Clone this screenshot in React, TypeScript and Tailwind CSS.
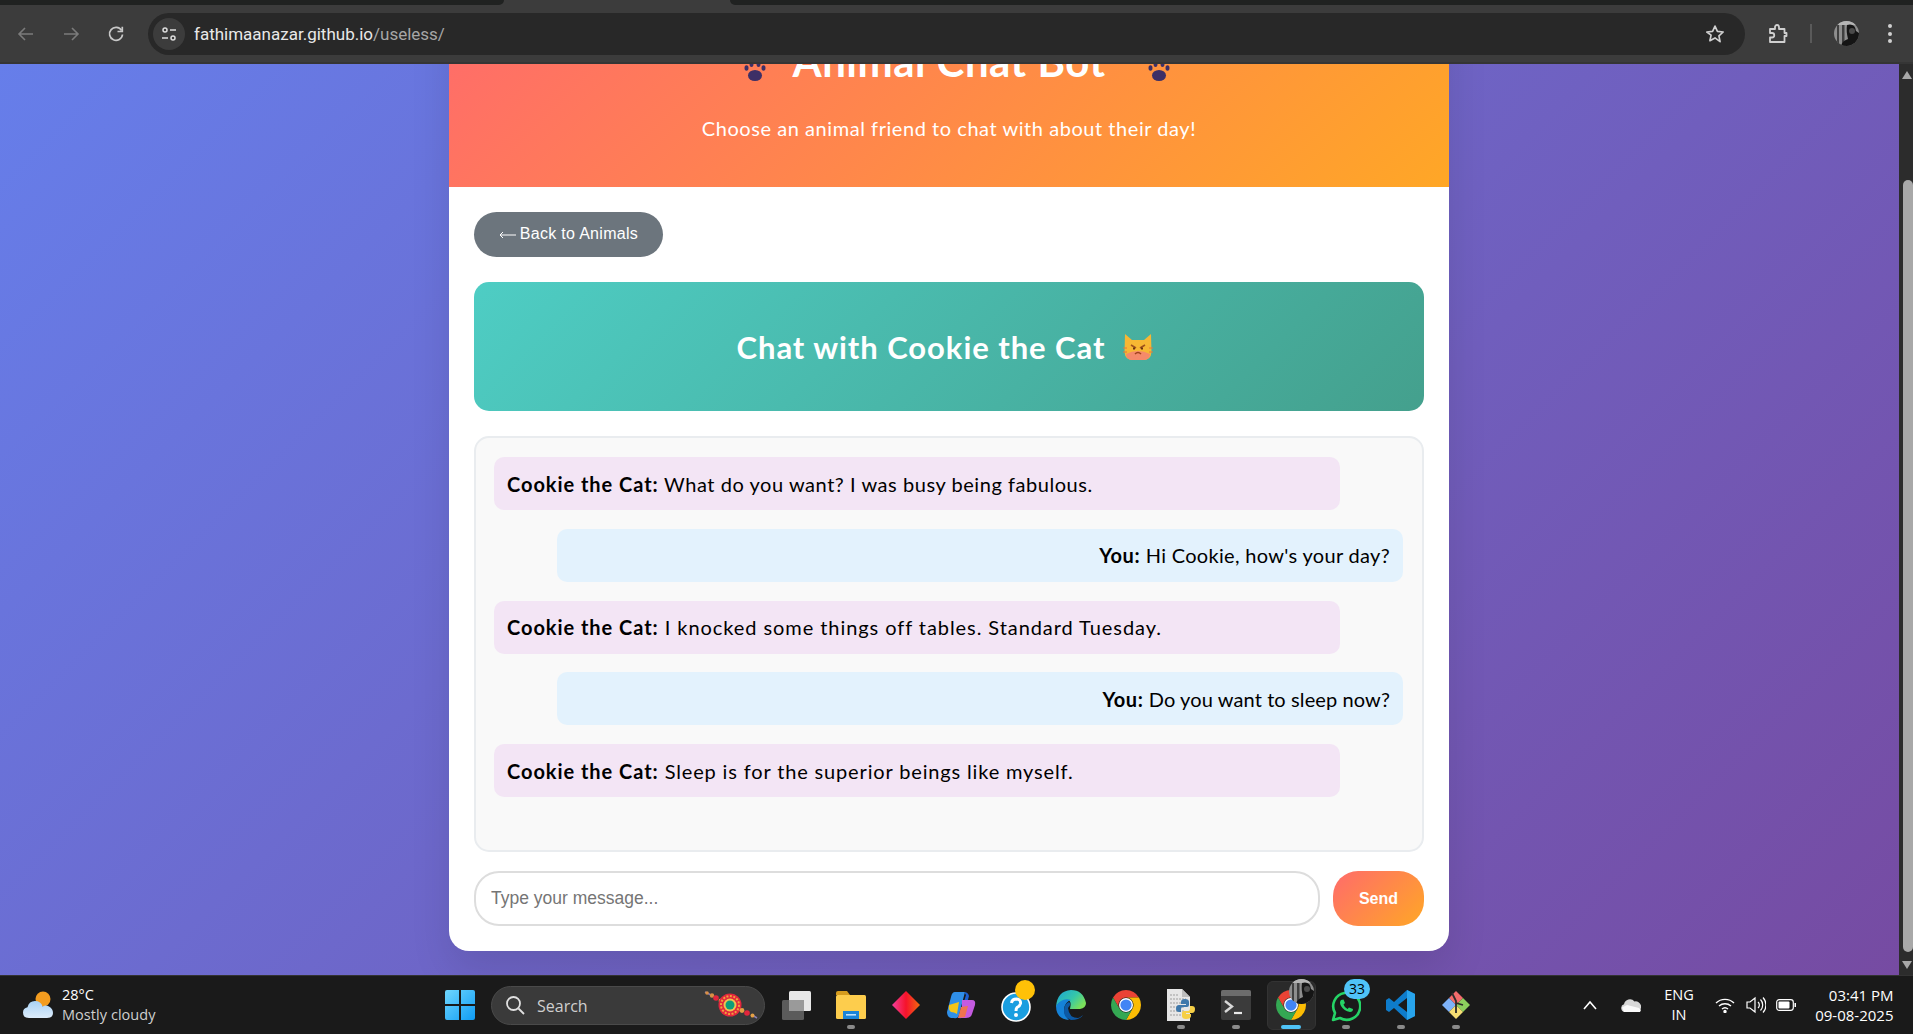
import React from "react";

const comic = "font-['Lato','Noto_Sans',sans-serif]";

function Chrome({ size = 30 }: { size?: number }) {
  return (
    <svg width={size} height={size} viewBox="0 0 24 24">
      <path fill="#ea4335" d="M22.39 6A12 12 0 0 0 1.61 6L6.8 15A6 6 0 0 1 12 6Z" />
      <path fill="#fbbc04" d="M12 24A12 12 0 0 0 22.39 6H12A6 6 0 0 1 17.2 15Z" />
      <path fill="#34a853" d="M1.61 6A12 12 0 0 0 12 24L17.2 15A6 6 0 0 1 6.8 15Z" />
      <circle cx="12" cy="12" r="5.6" fill="#fff" />
      <circle cx="12" cy="12" r="4.5" fill="#4285f4" />
    </svg>
  );
}

function Avatar({ id }: { id: string }) {
  return (
    <svg width="25" height="25" viewBox="0 0 25 25">
      <defs>
        <clipPath id={id}>
          <circle cx="12.500" cy="12.500" r="12.500" />
        </clipPath>
      </defs>
      <g clipPath={`url(#${id})`}>
        <rect width="25" height="25" fill="#8e8e8e" />
        <path d="M3 3h2v22H3zM8 3h2.500v22H8z" fill="#3f3f3f" />
        <rect x="0" y="0" width="25" height="4" fill="#b5b5b5" />
        <path d="M13 4 Q21 2 22 10 L25 12 V25 H7 Q8 20 14 18 Q12 10 13 4Z" fill="#151515" />
        <circle cx="18" cy="10" r="3" fill="#4a4a4a" />
      </g>
    </svg>
  );
}

function Paw() {
  return (
    <svg width="22" height="20" viewBox="0 0 22 20">
      <ellipse cx="11" cy="14.500" rx="7" ry="5.500" fill="#3d2f66" />
      <ellipse cx="2.500" cy="7" rx="2" ry="2.800" fill="#3d2f66" />
      <ellipse cx="7.500" cy="3" rx="2" ry="3" fill="#3d2f66" />
      <ellipse cx="14.500" cy="3" rx="2" ry="3" fill="#3d2f66" />
      <ellipse cx="19.500" cy="7" rx="2" ry="2.800" fill="#3d2f66" />
    </svg>
  );
}

function PoutingCat() {
  return (
    <svg width="30" height="28" viewBox="0 0 30 28">
      <path d="M2 1 L9 7 H21 L28 1 L28.500 19 Q28 27 20 27 H10 Q2 27 1.500 19 Z" fill="#f7b733" />
      <path d="M3 21 Q15 15 27 21 Q27 27 20 27 H10 Q3 27 3 21Z" fill="#f58a6a" />
      <path d="M8 12 L13 15 M22 12 L17 15" stroke="#a0521d" strokeWidth="1.6" />
      <path d="M10 15.500h2M18 15.500h2" stroke="#6b3410" strokeWidth="2" />
      <path d="M12 21 Q15 18 18 21" stroke="#a0421d" strokeWidth="1.500" fill="none" />
      <path d="M0 15h4M0 19h4M26 15h4M26 19h4" stroke="#e8763a" strokeWidth="1" />
    </svg>
  );
}

function Weather() {
  return (
    <svg width="32" height="28" viewBox="0 0 32 28">
      <defs>
        <linearGradient id="wc" x1="0" y1="0" x2="0" y2="1">
          <stop offset="0" stopColor="#a9d2f5" />
          <stop offset="1" stopColor="#dcecfb" />
        </linearGradient>
      </defs>
      <circle cx="21" cy="8" r="7.500" fill="#f39c1f" />
      <path d="M7 27 Q1 27 1 21.500 Q1 17 5.500 16.200 Q7 10 13 10 Q19 10 20.500 15.500 Q24 13.500 27 15.500 Q31 17.500 31 22 Q31 27 25 27 Z" fill="url(#wc)" />
    </svg>
  );
}

function Rakhi() {
  return (
    <svg width="54" height="28" viewBox="0 0 54 28">
      <path d="M1 1 L6 3.500M48 24 L53 27" stroke="#8a7fb8" strokeWidth="1.500" />
      <circle cx="3" cy="2" r="1.800" fill="#d98f45" />
      <circle cx="8" cy="4.500" r="2.200" fill="#d98f45" />
      <circle cx="12" cy="7" r="2.800" fill="#e3263d" />
      <circle cx="17" cy="10" r="2.400" fill="#e5a045" />
      <circle cx="26" cy="14" r="11.500" fill="#e3263d" />
      <circle cx="26" cy="14" r="9" fill="none" stroke="#f2a33a" strokeWidth="2" strokeDasharray="2 1.500" />
      <circle cx="26" cy="14" r="6.500" fill="#f2c14e" />
      <circle cx="26" cy="14" r="4.500" fill="#0f9d7a" />
      <circle cx="38" cy="19.500" r="2.400" fill="#e5a045" />
      <circle cx="43" cy="22" r="2.800" fill="#e3263d" />
      <circle cx="48.500" cy="24.500" r="2" fill="#e5a045" />
    </svg>
  );
}

function TaskView() {
  return (
    <svg width="32" height="32" viewBox="0 0 32 32">
      <rect x="2" y="11" width="22" height="20" rx="1.500" fill="#5b5b5b" />
      <rect x="9" y="2" width="22" height="20" rx="1.500" fill="#e8e8e8" />
      <rect x="9" y="11" width="15" height="11" fill="#9a9a9a" />
    </svg>
  );
}

function Folder() {
  return (
    <svg width="30" height="28" viewBox="0 0 30 28">
      <path d="M0 2 Q0 0 2 0 H11 L14 4 H0Z" fill="#d69c1e" />
      <rect y="4" width="30" height="24" rx="1.500" fill="#fdcd4d" />
      <rect x="7" y="20" width="16" height="8" fill="#1a84d8" />
      <rect x="10" y="23" width="10" height="1.600" fill="#bfe1fa" />
    </svg>
  );
}

function Diamond() {
  return (
    <svg width="30" height="30" viewBox="0 0 30 30">
      <defs>
        <linearGradient id="dg" x1="0" y1="0" x2="1" y2="0">
          <stop offset="0" stopColor="#f43f9d" />
          <stop offset="0.500" stopColor="#f5132b" />
          <stop offset="1" stopColor="#f36a10" />
        </linearGradient>
      </defs>
      <path d="M15 1 L29 15 L15 29 L1 15Z" fill="url(#dg)" />
    </svg>
  );
}

function Copilot() {
  return (
    <svg width="30" height="30" viewBox="0 0 30 30">
      <path d="M9 2 H19 L13 25 Q12 29 8 28 H5 Q1 27 1 22 L5 7 Q6 2 9 2Z" fill="#2f8fe8" />
      <path d="M3 15 L13 12 L11 24 Q8 22 5 22 Q2 20 3 15Z" fill="#f5c518" />
      <path d="M18 2 Q22 2 23 6 L18 25 Q17 29 13 28 L20 5Z" fill="#1e5fd0" />
      <path d="M16 10 H26 Q30 10 29 15 L26 24 Q25 28 20 28 H12 L16 22 Z" fill="#c45be0" />
      <path d="M15 17 L22 16 L19 27 L12 28Z" fill="#f0744f" />
    </svg>
  );
}

function Help() {
  return (
    <div className="relative w-[30px] h-[30px]">
      <svg width="30" height="32" viewBox="0 0 30 32">
        <circle cx="15" cy="17" r="14" fill="#1a9ee0" stroke="#fff" strokeWidth="1.600" />
        <path d="M10.500 13 Q11 9 15.500 9 Q20 9.500 19.500 13.500 Q19 16 16 17.500 Q15 18.500 15 21" stroke="#fff" strokeWidth="3" fill="none" />
        <circle cx="15" cy="25" r="2" fill="#fff" />
      </svg>
      <span className="absolute left-[14px] top-[-10px] w-[20px] h-[20px] rounded-full bg-[#ffc107]" />
    </div>
  );
}

function Edge() {
  return (
    <svg width="30" height="30" viewBox="0 0 30 30">
      <defs>
        <linearGradient id="eg" x1="0" y1="0" x2="1" y2="0.600">
          <stop offset="0" stopColor="#1aa3d9" />
          <stop offset="0.600" stopColor="#36c7a8" />
          <stop offset="1" stopColor="#7be05a" />
        </linearGradient>
      </defs>
      <path d="M15 0 Q27 0 30 13 Q30 18 24 19 H14 Q16 11 12 10 Q4 10 0 17 Q1 1 15 0Z" fill="url(#eg)" />
      <path d="M0 16 Q0 29 13 30 Q8 25 8 19 Q9 12 15 10 Q6 7 0 16Z" fill="#1582d8" />
      <path d="M12 18 Q13 28 22 28 Q25 27 27 25 Q24 30 15 30 Q8 28 8 21 Q8 14 13 12 Q16 14 12 18Z" fill="#0c59a4" />
    </svg>
  );
}

function PyFile() {
  return (
    <div className="relative w-[30px] h-[32px]">
      <svg width="30" height="32" viewBox="0 0 30 32">
        <path d="M1 0 H16 L24 8 V32 H1Z" fill="#e6e6e6" />
        <path d="M16 0 L24 8 H16Z" fill="#bdbdbd" />
        <path d="M4 6h9M4 10h16M4 14h16M4 18h14M4 22h14M4 26h16" stroke="#9d9d9d" strokeWidth="1.200" strokeDasharray="2 1" />
        <path d="M19 10 Q15 10 15 13 V15 H20 V16 H13 Q10 16 10 20 Q10 23 13 23 H15 V20 Q15 18 17 18 H21 Q23 18 23 16 V13 Q23 10 19 10Z" fill="#3e78ab" />
        <path d="M20 30 Q25 30 25 27 V25 H20 V24 H26 Q29 24 29 20 Q29 17 26 17 H24 V19 Q24 22 22 22 H18 Q16 22 16 24 V27 Q16 30 20 30Z" fill="#f6cf46" />
      </svg>
    </div>
  );
}

function Terminal() {
  return (
    <svg width="30" height="30" viewBox="0 0 30 30">
      <rect y="0" width="30" height="30" rx="2" fill="#3b3b3b" />
      <path d="M2 0 H28 Q30 0 30 2 V6 H0 V2 Q0 0 2 0Z" fill="#6c6c6c" />
      <path d="M4 11 L11 16.500 L4 22" stroke="#d8d8d8" strokeWidth="2.400" fill="none" />
      <path d="M13 23h8" stroke="#e8e8e8" strokeWidth="2.200" />
    </svg>
  );
}

function Whatsapp() {
  return (
    <div className="relative w-[30px] h-[30px]">
      <svg width="30" height="32" viewBox="0 0 30 32">
        <path d="M2 30 L4 23 A13.500 13.500 0 1 1 9 28 Z" fill="none" stroke="#25d366" strokeWidth="2.600" strokeLinejoin="round" />
        <path d="M10 10 Q8 12 10 16 Q13 21 19 22 Q22 22 22 19 L18 17.500 L16.500 19 Q13.500 17.500 12.500 14.500 L14 13 L12.500 9.500 Z" fill="#25d366" />
      </svg>
      <span className="absolute left-[13px] top-[-11px] w-[26px] h-[20px] rounded-full bg-[#4fc3f7] text-black text-[14px] leading-[20px] text-center font-['Open_Sans',sans-serif]">33</span>
    </div>
  );
}

function VsCode() {
  return (
    <svg width="30" height="30" viewBox="0 0 30 30">
      <path d="M21 0 L29 4 V26 L21 30 L8 18 L3 22 L0 20 V10 L3 8 L8 12Z M21 8 L12 15 L21 22Z" fill="#0e7ccb" fillRule="evenodd" />
      <path d="M21 0 L29 4 V26 L21 30Z" fill="#28a4ec" />
    </svg>
  );
}

function Git() {
  return (
    <svg width="30" height="30" viewBox="0 0 30 30">
      <path d="M15 15 L8 8 L15 1 L22 8Z" fill="#f36b6b" />
      <path d="M15 15 L8 8 L1 15 L8 22Z" fill="#7eb2f8" />
      <path d="M22 8 L29 15 L22 22 L15 15Z" fill="#8ccf5e" />
      <path d="M15 15 L22 22 L15 29 L8 22Z" fill="#f6de73" />
      <path d="M11 3 L15 11 V23 M15 13 L22 15" stroke="#2b2b2b" strokeWidth="1.800" fill="none" />
    </svg>
  );
}

function TaskIcon({ children, dot, active }: { children?: React.ReactNode; dot?: boolean; active?: boolean }) {
  return (
    <div className="w-[55px] h-full flex items-center justify-center relative">
      {active && <span className="absolute left-[3px] right-[3px] top-[5px] bottom-[4px] rounded-md bg-[#2a2a2a] border border-[#333]" />}
      <div className="relative">{children}</div>
      {dot && !active && <span className="absolute bottom-[5px] left-1/2 -translate-x-1/2 w-[8px] h-[4px] rounded-full bg-[#8a8a8a]" />}
      {active && <span className="absolute bottom-[5px] left-1/2 -translate-x-1/2 w-[20px] h-[4px] rounded-full bg-[#4fc3f7]" />}
    </div>
  );
}

function Message({ who, text, me, track }: { who: string; text: string; me?: boolean; track: string }) {
  return (
    <div className={`w-[846px] h-[53px] rounded-[10px] px-[13px] flex items-center text-black ${me ? "self-end justify-end bg-[#e3f2fd]" : "self-start bg-[#f3e5f5]"}`}>
      <span className={`${comic} text-[20px] ${track}`}>
        <strong className={`font-bold ${me ? "tracking-[0.6px]" : "tracking-[0.95px]"}`}>{who}:</strong> {text}
      </span>
    </div>
  );
}

export default function App() {
  return (
    <div className="w-[1913px] h-[1034px] flex flex-col overflow-hidden bg-[#1a1a1a]">
      {/* browser chrome */}
      <div className="h-[64px] shrink-0 bg-[#3c3c3c] flex flex-col relative">
        <div className="h-[5px] flex">
          <div className="w-[504px] bg-[#202221] rounded-br-lg" />
          <div className="w-[226px]" />
          <div className="flex-1 bg-[#202221] rounded-bl-lg" />
        </div>
        <div className="h-[57px] flex items-center text-[#c8c8c8]">
          <div className="w-[148px] flex items-center pl-[16px] gap-[25px] shrink-0">
            <svg width="20" height="20" viewBox="0 0 20 20" fill="none" stroke="#7b7b7b" strokeWidth="1.600"><path d="M17 10H3M9 4l-6 6 6 6" /></svg>
            <svg width="20" height="20" viewBox="0 0 20 20" fill="none" stroke="#7b7b7b" strokeWidth="1.600"><path d="M3 10h14M11 4l6 6-6 6" /></svg>
            <svg width="20" height="20" viewBox="0 0 20 20" fill="none" stroke="#c8c8c8" strokeWidth="1.700"><path d="M15.600 6.500A6.500 6.500 0 1 0 16.500 10.500" /><path d="M16.300 2.700v4.800h-4.800" /></svg>
          </div>
          <div className="w-[1597px] h-[42px] bg-[#282828] rounded-full flex items-center pl-[5px] pr-[20px] mt-[1px]">
            <div className="w-[32px] h-[32px] rounded-full bg-[#3c3c3c] flex items-center justify-center">
              <svg width="16" height="16" viewBox="0 0 16 16" fill="none" stroke="#dcdcdc" strokeWidth="1.500"><circle cx="4" cy="4" r="2" /><path d="M9 4h6M1 12h6" /><circle cx="12" cy="12" r="2" /></svg>
            </div>
            <span className="ml-[9px] pt-[1px] text-[17px] font-['Roboto',sans-serif] text-[#e8e8e8]">fathimaanazar.github.io<span className="text-[#a6a6a6]">/useless/</span></span>
            <svg className="ml-auto" width="20" height="20" viewBox="0 0 24 24" fill="none" stroke="#d0d0d0" strokeWidth="2" strokeLinejoin="round"><path d="M12 2.500l2.900 6.300 6.900.8-5.100 4.700 1.400 6.800L12 16.700l-6.100 3.400 1.400-6.800L2.200 9.600l6.900-.8z" /></svg>
          </div>
          <svg className="ml-[24px]" width="20" height="20" viewBox="0 0 20 20" fill="none" stroke="#d0d0d0" strokeWidth="1.800" strokeLinejoin="round"><path d="M1 5h5V3a2 2 0 0 1 4 0v2h5.500v4h2v3h-2v6H1v-4.500h2a2.200 2.200 0 0 0 0-4.500H1z" /></svg>
          <span className="ml-[21px] w-[2px] h-[19px] bg-[#5a5a5a]" />
          <div className="ml-[22px] flex"><Avatar id="av1" /></div>
          <div className="ml-[29px] flex flex-col gap-[3.500px]">
            <span className="w-[4px] h-[4px] rounded-full bg-[#d0d0d0]" />
            <span className="w-[4px] h-[4px] rounded-full bg-[#d0d0d0]" />
            <span className="w-[4px] h-[4px] rounded-full bg-[#d0d0d0]" />
          </div>
        </div>
        <div className="h-[2px] bg-[#353535]" />
      </div>

      {/* page */}
      <div className="h-[911px] shrink-0 flex overflow-hidden">
        <div className="flex-1 flex justify-center bg-[linear-gradient(135deg,#667eea,#764ba2)]">
          <div className="w-[1000px] h-[947px] -mt-[60px] mr-[1px] bg-white rounded-[20px] overflow-hidden shadow-[0_20px_40px_rgba(0,0,0,0.1)] flex flex-col shrink-0">
            <div className="h-[183px] shrink-0 bg-[linear-gradient(135deg,#ff6b6b,#ffa726)] text-white flex flex-col items-center">
              <div className="mt-[33px] h-[48px] flex items-end pl-[15px]">
                <span className="mb-[4px]"><Paw /></span>
                <h1 className={`${comic} font-bold text-[42px] leading-[48px] ml-[27px] mr-[48px] tracking-[0.5px] w-[307px] text-center whitespace-nowrap`}>Animal Chat Bot</h1>
                <span className="mb-[4px]"><Paw /></span>
              </div>
              <p className={`${comic} mt-[30px] text-[20px] leading-[26px] tracking-[0.55px]`}>Choose an animal friend to chat with about their day!</p>
            </div>
            <div className="flex-1 px-[25px] pt-[25px] flex flex-col">
              <button className="w-[189px] h-[45px] pb-[1px] rounded-[25px] bg-[#6c757d] text-white text-[16px] tracking-[0.3px] font-['Liberation_Sans',sans-serif] flex items-center justify-center gap-[4px]">
                <svg width="17" height="8" viewBox="0 0 17 8" fill="none" stroke="#fff" strokeWidth="1" className="mt-[2px]"><path d="M17 4H1M4 1L1 4l3 3" /></svg>
                <span>Back to Animals</span>
              </button>
              <div className="mt-[25px] h-[129px] rounded-[15px] bg-[linear-gradient(135deg,#4ecdc4,#44a08d)] flex items-center justify-center gap-[17px] text-white pr-[9px]">
                <h2 className={`${comic} font-bold text-[31px] tracking-[0.95px] pt-[2px]`}>Chat with Cookie the Cat</h2>
                <PoutingCat />
              </div>
              <div className="mt-[25px] h-[416px] rounded-[15px] border-2 border-[#e9ecef] bg-[#f9f9f9] pl-[18px] pr-[19px] pt-[19px] flex flex-col gap-[18.750px]">
                <Message track="tracking-[0.55px]" who="Cookie the Cat" text="What do you want? I was busy being fabulous." />
                <Message track="tracking-[0.32px]" me who="You" text="Hi Cookie, how's your day?" />
                <Message track="tracking-[0.93px]" who="Cookie the Cat" text="I knocked some things off tables. Standard Tuesday." />
                <Message track="tracking-[0.11px]" me who="You" text="Do you want to sleep now?" />
                <Message track="tracking-[0.85px]" who="Cookie the Cat" text="Sleep is for the superior beings like myself." />
              </div>
              <div className="mt-[19px] flex gap-[13px]">
                <input
                  readOnly
                  placeholder="Type your message..."
                  className="w-[846px] h-[55px] rounded-[25px] border-2 border-[#ddd] bg-white px-[15px] text-[17.500px] font-['Liberation_Sans',sans-serif] placeholder:text-[#757575] outline-none"
                />
                <button className="w-[91px] h-[55px] rounded-[25px] bg-[linear-gradient(135deg,#ff6b6b,#ffa726)] text-white font-bold text-[16px] font-['Liberation_Sans',sans-serif]">Send</button>
              </div>
            </div>
          </div>
        </div>
        <div className="w-[14px] shrink-0 bg-[#2c2c2c] flex flex-col items-center">
          <span className="mt-[7px] w-0 h-0 border-x-[5px] border-x-transparent border-b-[8px] border-b-[#a8a8a8] ml-[1px]" />
          <span className="mt-[101px] w-[10px] h-[772px] ml-[4px] rounded-[5px] bg-[#a8a8a8]" />
          <span className="mt-[9px] w-0 h-0 border-x-[5px] border-x-transparent border-t-[8px] border-t-[#a8a8a8] ml-[1px]" />
        </div>
      </div>

      {/* taskbar */}
      <div className="flex-1 bg-[#1a1a1a] border-t border-[#333] flex items-center text-white font-['Open_Sans',sans-serif] relative">
        <div className="w-[445px] shrink-0 pl-[22px] flex items-center gap-[8px]">
          <Weather />
          <div className="flex flex-col text-[14.500px] leading-[20px] -mt-[1px]">
            <span className="text-white">28°C</span>
            <span className="text-[#cfcfcf] tracking-[0.05px]">Mostly cloudy</span>
          </div>
        </div>
        <svg width="30" height="30" viewBox="0 0 30 30" className="shrink-0">
          <defs>
            <linearGradient id="wl" x1="0" y1="0" x2="1" y2="1">
              <stop offset="0" stopColor="#6fd6fd" />
              <stop offset="1" stopColor="#0f9cf5" />
            </linearGradient>
          </defs>
          <path fill="url(#wl)" d="M0 2 Q0 0 2 0 H14 V14 H0Z M16 0 H28 Q30 0 30 2 V14 H16Z M0 16 H14 V30 H2 Q0 30 0 28Z M16 16 H30 V28 Q30 30 28 30 H16Z" />
        </svg>
        <div className="ml-[16px] w-[274px] h-[39px] rounded-full bg-[#3a3a3a] border border-[#4a4a4a] flex items-center pl-[13px] shrink-0">
          <svg width="20" height="20" viewBox="0 0 20 20" fill="none" stroke="#e0e0e0" strokeWidth="1.800"><circle cx="8.500" cy="8.500" r="6.500" /><path d="M13.500 13.500L19 19" /></svg>
          <span className="ml-[12px] text-[16px] leading-[20px] pt-[1px] text-[#cfcfcf]">Search</span>
          <span className="ml-auto mr-[6px] flex"><Rakhi /></span>
        </div>
        <div className="ml-[3.500px] flex h-full items-center shrink-0">
          <TaskIcon><TaskView /></TaskIcon>
          <TaskIcon dot><Folder /></TaskIcon>
          <TaskIcon><Diamond /></TaskIcon>
          <TaskIcon><Copilot /></TaskIcon>
          <TaskIcon><Help /></TaskIcon>
          <TaskIcon><Edge /></TaskIcon>
          <TaskIcon><Chrome /></TaskIcon>
          <TaskIcon dot><PyFile /></TaskIcon>
          <TaskIcon dot><Terminal /></TaskIcon>
          <TaskIcon active>
            <Chrome />
            <span className="absolute left-[13px] top-[-11px] flex"><Avatar id="av2" /></span>
          </TaskIcon>
          <TaskIcon dot><Whatsapp /></TaskIcon>
          <TaskIcon dot><VsCode /></TaskIcon>
          <TaskIcon dot><Git /></TaskIcon>
        </div>
        <div className="ml-auto pr-[19.500px] flex items-center shrink-0">
          <svg width="16" height="10" viewBox="0 0 16 10" fill="none" stroke="#fff" strokeWidth="1.600"><path d="M2 9l6-7 6 7" /></svg>
          <svg className="ml-[23px]" width="20" height="14" viewBox="0 0 20 14"><path d="M4 14a4 4 0 0 1-1-7.800A6 6 0 0 1 13.500 3.500 4.500 4.500 0 0 1 16 14z" fill="#d8d8d8" /><path d="M1 9.500L6 7l12 3 2 2-1 2H3z" fill="#fafafa" /></svg>
          <div className="ml-[21px] w-[34px] flex flex-col items-center text-[14.500px] leading-[20px]">
            <span>ENG</span>
            <span>IN</span>
          </div>
          <svg className="ml-[19px]" width="20" height="16" viewBox="0 0 20 16" fill="none" stroke="#fff" strokeWidth="1.400"><path d="M1 6a13 13 0 0 1 18 0M4 9a9 9 0 0 1 12 0M7 12a4.500 4.500 0 0 1 6 0" /><circle cx="10" cy="14.500" r="1" fill="#fff" /></svg>
          <svg className="ml-[11px]" width="20" height="18" viewBox="0 0 20 18" fill="none" stroke="#fff" strokeWidth="1.200"><path d="M1 6h3l5-4v14l-5-4H1z" /><path d="M12 6a4 4 0 0 1 0 6M14.500 3.500a8 8 0 0 1 0 11M17 1.500a11 11 0 0 1 0 15" /></svg>
          <svg className="ml-[10px]" width="20" height="12" viewBox="0 0 20 12" fill="none"><rect x="0.700" y="0.700" width="16.600" height="10.600" rx="2.500" stroke="#fff" strokeWidth="1.200" /><rect x="2.500" y="2.500" width="11" height="7" rx="1" fill="#fff" /><rect x="18.500" y="4" width="1.500" height="4" fill="#fff" /></svg>
          <div className="ml-[9.500px] w-[88px] flex flex-col items-end text-[15px] leading-[20px] -mt-[1px]">
            <span>03:41 PM</span>
            <span>09-08-2025</span>
          </div>
        </div>
      </div>
    </div>
  );
}
